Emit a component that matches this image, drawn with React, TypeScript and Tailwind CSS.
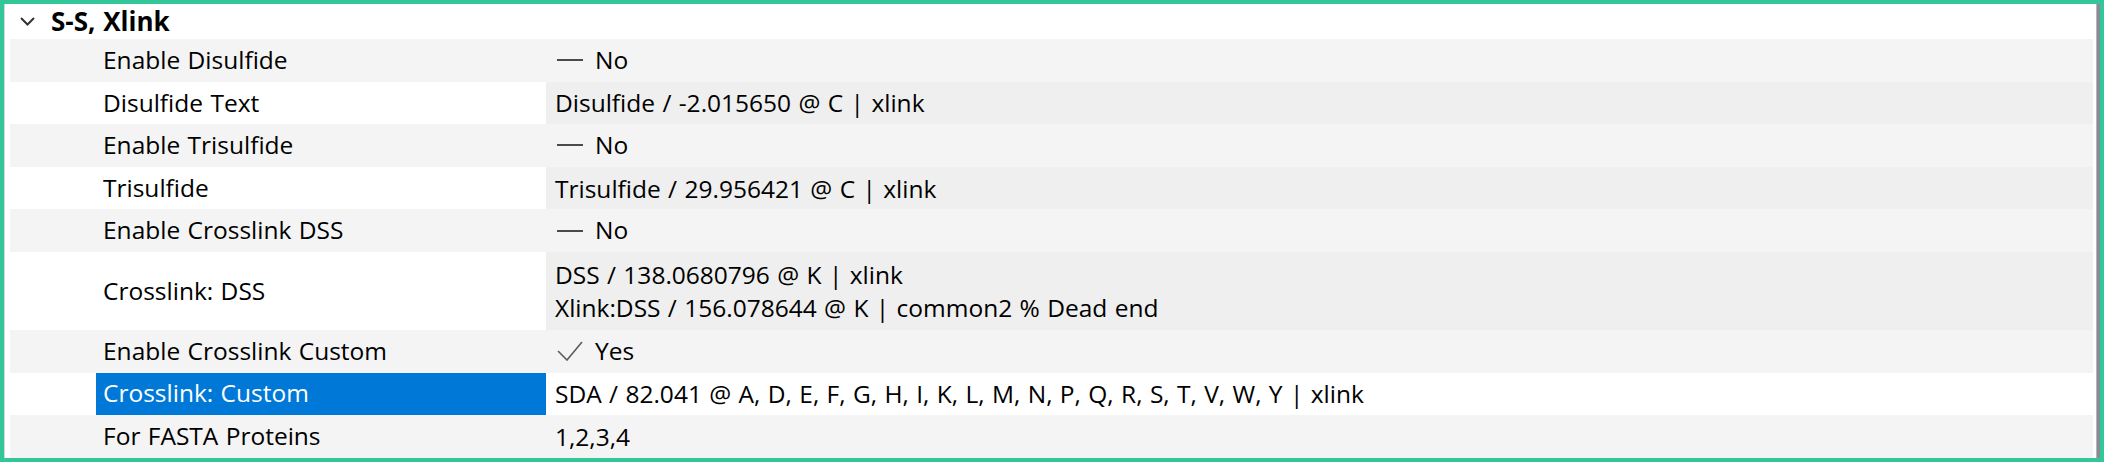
import React from "react";

type Prop = {
  name: string;
  value: string[];
  kind?: "no" | "yes";
  selected?: boolean;
  tall?: boolean;
};

const PROPS: Prop[] = [
  { name: "Enable Disulfide", value: ["No"], kind: "no" },
  { name: "Disulfide Text", value: ["Disulfide / -2.015650 @ C | xlink"] },
  { name: "Enable Trisulfide", value: ["No"], kind: "no" },
  { name: "Trisulfide", value: ["Trisulfide / 29.956421 @ C | xlink"] },
  { name: "Enable Crosslink DSS", value: ["No"], kind: "no" },
  {
    name: "Crosslink: DSS",
    value: [
      "DSS / 138.0680796 @ K | xlink",
      "Xlink:DSS / 156.078644 @ K | common2 % Dead end",
    ],
    tall: true,
  },
  { name: "Enable Crosslink Custom", value: ["Yes"], kind: "yes" },
  {
    name: "Crosslink: Custom",
    value: [
      "SDA / 82.041 @ A, D, E, F, G, H, I, K, L, M, N, P, Q, R, S, T, V, W, Y | xlink",
    ],
    selected: true,
  },
  { name: "For FASTA Proteins", value: ["1,2,3,4"] },
];

const Check = () => (
  <svg width="26" height="20" viewBox="0 0 26 20" className="shrink-0">
    <polyline
      points="1,10 10,19 25,1"
      fill="none"
      stroke="#5c5c5c"
      strokeWidth="1.6"
    />
  </svg>
);

const PropRow: React.FC<{ prop: Prop; odd: boolean }> = ({ prop, odd }) => {
  const rowBg = odd ? "bg-[#f4f4f4]" : "bg-white";
  const valueBg = odd || prop.selected ? "" : "bg-[#efefef]";
  const nameCls = prop.selected
    ? "bg-[#0078d7] text-white"
    : "text-black";

  return (
    <div className={`flex ${prop.tall ? "h-[78px]" : "h-[42.6px]"} ${rowBg}`}>
      <div className="w-[86px] shrink-0" />
      <div className={`w-[450px] shrink-0 flex items-center pl-[7px] ${nameCls}`}>
        {prop.name}
      </div>
      <div className={`flex-1 flex flex-col justify-center pl-[9px] ${valueBg}`}>
        {prop.kind === "no" && (
          <div className="flex items-center">
            <span className="ml-[2px] w-[26px] h-[2px] bg-[#4a4a4a]" />
            <span className="ml-[12px]">{prop.value[0]}</span>
          </div>
        )}
        {prop.kind === "yes" && (
          <div className="flex items-center">
            <span className="ml-[2px] flex">
              <Check />
            </span>
            <span className="ml-[12px]">{prop.value[0]}</span>
          </div>
        )}
        {!prop.kind &&
          prop.value.map((line) => (
            <div key={line} className="leading-[33px]">
              {line}
            </div>
          ))}
      </div>
    </div>
  );
};

export default function App() {
  return (
    <div
      className="w-[2104px] h-[462px] border-4 border-[#33c699] bg-white flex text-[24.5px] [word-spacing:1px] text-black"
      style={{ fontFamily: '"Open Sans", "Noto Sans", sans-serif' }}
    >
      <div className="w-px bg-[#d6d6d6]" />
      <div className="flex-1 flex flex-col pl-[5px]">
        <div className="h-[35px] flex items-center">
          <svg width="15" height="9" viewBox="0 0 15 9" className="ml-[10px]">
            <polyline
              points="1,1 7.5,7.5 14,1"
              fill="none"
              stroke="#333333"
              strokeWidth="2"
            />
          </svg>
          <span className="ml-[16px] font-bold text-[26px]">S-S, Xlink</span>
        </div>
        {PROPS.map((p, i) => (
          <PropRow key={p.name} prop={p} odd={i % 2 === 0} />
        ))}
      </div>
      <div className="w-[3px] bg-white" />
      <div className="w-[4px] bg-[#898c95] border-l border-[#b5b7bd]" />
    </div>
  );
}
